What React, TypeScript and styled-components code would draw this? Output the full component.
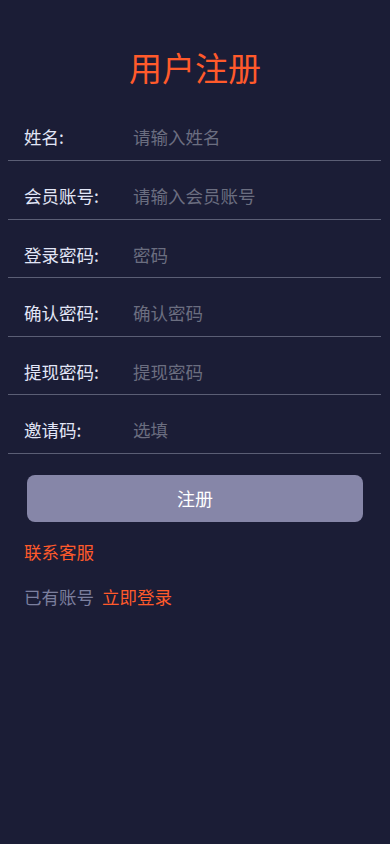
import React from "react";
import styled, { createGlobalStyle } from "styled-components";

const Global = createGlobalStyle`
  html, body { margin: 0; padding: 0; background: #1b1d36; }
  body { font-family: "Noto Sans CJK SC", "Noto Sans", sans-serif; }
  * { box-sizing: border-box; }
`;

const Page = styled.div`
  min-height: 844px;
  background: #1b1d36;
  display: flex;
  flex-direction: column;
`;

const Title = styled.h1`
  margin: 0;
  padding-top: 45px;
  padding-bottom: 13.4px;
  text-align: center;
  font-size: 33px;
  line-height: 44px;
  font-weight: 400;
  color: #ff5a2b;
`;

const Form = styled.div`
  display: flex;
  flex-direction: column;
  margin: 0 9px 0 8px;
`;

const Row = styled.label`
  display: flex;
  align-items: center;
  padding: 24px 0 11.6px 16px;
  border-bottom: 1px solid #5b5e75;
`;

const Label = styled.span`
  width: 109px;
  flex-shrink: 0;
  font-size: 17.5px;
  line-height: 22px;
  color: #e2e6f7;
`;

const Input = styled.input`
  flex: 1;
  min-width: 0;
  border: none;
  outline: none;
  background: transparent;
  padding: 0;
  font-family: inherit;
  font-size: 17.5px;
  line-height: 22px;
  height: 22px;
  color: #e2e6f7;
  &::placeholder { color: #6b6e80; }
`;

const Button = styled.button`
  margin: 21px 27px 0 27px;
  height: 47px;
  border: none;
  border-radius: 8px;
  background: #8686a8;
  color: #ffffff;
  font-family: inherit;
  font-size: 18px;
`;

const Links = styled.div`
  display: flex;
  flex-direction: column;
  gap: 23px;
  padding: 19px 24px 0;
`;

const Line = styled.div`
  display: flex;
  align-items: center;
  font-size: 17.5px;
  line-height: 22px;
`;

const Muted = styled.span`
  color: #7b7f9e;
`;

const Accent = styled.a<{ $gap?: number }>`
  color: #ff5a2b;
  text-decoration: none;
  margin-left: ${(p) => p.$gap ?? 0}px;
`;

const fields = [
  { label: "姓名:", ph: "请输入姓名", type: "text" },
  { label: "会员账号:", ph: "请输入会员账号", type: "text" },
  { label: "登录密码:", ph: "密码", type: "password" },
  { label: "确认密码:", ph: "确认密码", type: "password" },
  { label: "提现密码:", ph: "提现密码", type: "password" },
  { label: "邀请码:", ph: "选填", type: "text" },
];

export default function App() {
  return (
    <>
      <Global />
      <Page>
        <Title>用户注册</Title>
        <Form>
          {fields.map((f) => (
            <Row key={f.label}>
              <Label>{f.label}</Label>
              <Input type={f.type} placeholder={f.ph} />
            </Row>
          ))}
        </Form>
        <Button>注册</Button>
        <Links>
          <Line>
            <Accent href="#">联系客服</Accent>
          </Line>
          <Line>
            <Muted>已有账号</Muted>
            <Accent href="#" $gap={8}>立即登录</Accent>
          </Line>
        </Links>
      </Page>
    </>
  );
}
